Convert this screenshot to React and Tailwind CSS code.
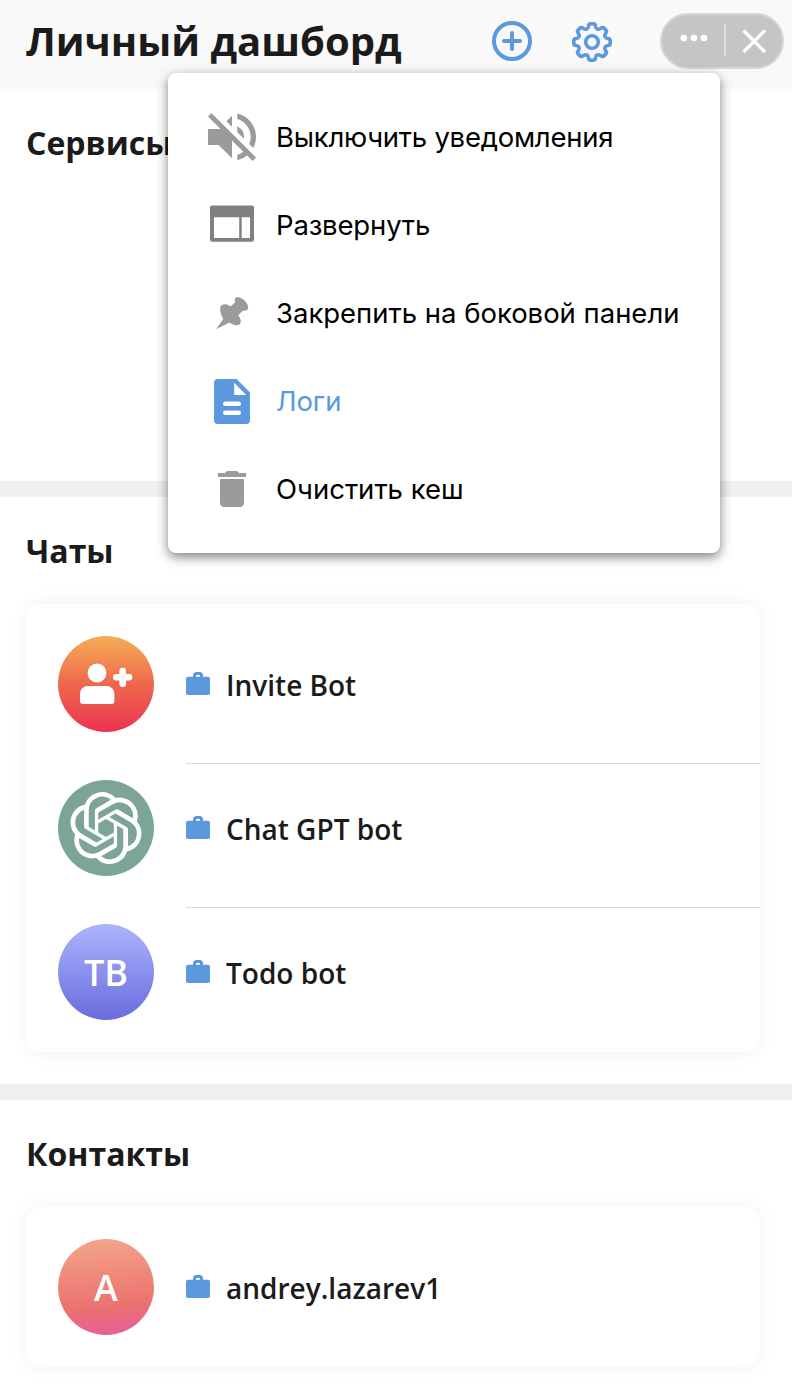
import React from 'react';
import { MdVolumeOff, MdDelete } from 'react-icons/md';
import { SiOpenai } from 'react-icons/si';

const TOOTH_ANGLES = [0, 45, 90, 135, 180, 225, 270, 315];

function rotate(x, y, deg) {
  const a = (deg * Math.PI) / 180;
  return `${(20 + x * Math.cos(a) - y * Math.sin(a)).toFixed(2)} ${(20 + x * Math.sin(a) + y * Math.cos(a)).toFixed(2)}`;
}

const gearPath =
  TOOTH_ANGLES.map((deg, i) => {
    const p = (x, y) => rotate(x, y, deg);
    const next = (x, y) => rotate(x, y, deg + 45);
    return `${i === 0 ? 'M' : 'L'}${p(-3.5, -15.8)} Q${p(-3.3, -18.2)} ${p(-1.4, -18.2)} L${p(1.4, -18.2)} Q${p(3.3, -18.2)} ${p(3.5, -15.8)} C${p(3.9, -12.8)} ${next(-3.9, -12.8)} ${next(-3.5, -15.8)}`;
  }).join(' ') + 'Z';

function PlusCircleIcon() {
  return (
    <svg className="size-10" viewBox="0 0 40 40" fill="none" stroke="currentColor" strokeWidth="4" strokeLinecap="round">
      <circle cx="20" cy="20" r="18" />
      <path d="M12 20h16M20 12v16" />
    </svg>
  );
}

function GearIcon() {
  return (
    <svg className="size-10" viewBox="0 0 40 40" fill="none" stroke="currentColor" strokeWidth="3.6" strokeLinejoin="round">
      <path d={gearPath} />
      <circle cx="20" cy="20" r="6.3" />
    </svg>
  );
}

function WindowIcon() {
  return (
    <svg className="mb-[3px] h-[37px] w-11" viewBox="0 0 44 37">
      <rect y="0.500" width="44" height="36.200" rx="2" fill="#808080" />
      <path fill="#fff" d="M4 12.300h25.200v20.700H4zM31.700 12.300H40v20.700h-8.300z" />
    </svg>
  );
}

function PinIcon() {
  return (
    <svg className="h-[34px] w-[34px] text-[#9b9b9b]" viewBox="0 0 34 34" fill="currentColor">
      <path d="M1.200 33.300L8.300 22.700C6 19.500 5 16 5.200 12.500C5.300 9.800 7 8.300 10 8.300C12.500 8.500 14 9.600 15.500 10.500L20.300 6.200C19 3.500 20 1.200 22.800 1.200C27.500 1.500 33.200 6.500 33.200 11.800C33 14.300 30.500 15.200 28 14.500L23.200 19.200C25.200 21.500 26 24 25.700 26.300C25.300 28.800 23 29.700 20.500 29.200C18 28.700 16 27.700 14.300 26.500Z" />
    </svg>
  );
}

function LogIcon() {
  return (
    <svg className="h-[45px] w-9" viewBox="0 0 36 45">
      <path fill="currentColor" d="M4 0h18.500L36 13.500V41a4 4 0 0 1-4 4H4a4 4 0 0 1-4-4V4a4 4 0 0 1 4-4z" />
      <path fill="#fff" d="M20.200 3.700v12.200h12z" />
      <rect x="9" y="22.500" width="18" height="4.400" rx="2.200" fill="#fff" />
      <rect x="9" y="31.500" width="18" height="4.400" rx="2.200" fill="#fff" />
    </svg>
  );
}

function BriefcaseIcon() {
  return (
    <svg className="size-6 shrink-0 text-[#5b98de]" viewBox="0 0 24 24">
      <rect y="4.700" width="24" height="18.300" rx="2" fill="currentColor" />
      <path d="M8.500 6V3.500a2 2 0 0 1 2-2h3a2 2 0 0 1 2 2V6" fill="none" stroke="currentColor" strokeWidth="3" />
    </svg>
  );
}

function InviteIcon() {
  return (
    <svg className="size-24" viewBox="0 0 96 96" fill="#fff">
      <circle cx="39" cy="37" r="9.400" />
      <path d="M30 50h18.400a8 8 0 0 1 8 8v7a3 3 0 0 1-3 3H25a3 3 0 0 1-3-3v-7a8 8 0 0 1 8-8z" />
      <path d="M58.300 41.300H71M64.700 35v12.700" stroke="#fff" strokeWidth="6.600" strokeLinecap="round" />
    </svg>
  );
}

const menuItems = [
  { label: 'Выключить уведомления', tracking: 'tracking-[-0.25px]', icon: <MdVolumeOff className="size-16 shrink-0 text-[#9b9b9b]" /> },
  { label: 'Развернуть', tracking: 'tracking-[-0.16px]', icon: <WindowIcon /> },
  { label: 'Закрепить на боковой панели', tracking: 'tracking-[-0.02px]', icon: <PinIcon /> },
  { label: 'Логи', tracking: 'tracking-[-0.1px]', icon: <LogIcon />, active: true },
  { label: 'Очистить кеш', tracking: 'tracking-normal', icon: <MdDelete className="size-12 text-[#9b9b9b]" /> },
];

const chats = [
  { name: 'Invite Bot', avatar: <InviteIcon />, bg: 'bg-linear-to-b from-[#f4ae56] via-[#ee674d] to-[#eb2f50]' },
  { name: 'Chat GPT bot', avatar: <SiOpenai className="size-[72px] text-white" />, bg: 'bg-[#7ca598]' },
  { name: 'Todo bot', avatar: 'TB', bg: 'bg-linear-to-b from-[#acb5fb] to-[#6a6bdd] pt-0.5' },
];

const contacts = [
  { name: 'andrey.lazarev1', avatar: 'A', bg: 'bg-[linear-gradient(175deg,#f3a488_4%,#eb716f_70%,#e55da0_100%)] pt-0.5' },
];

function Card({ items }) {
  return (
    <ul className="mx-[26px] mr-8 rounded-2xl bg-white pt-4 shadow-[0_0_20px_rgba(0,0,0,0.06)]">
      {items.map((item, i) => (
        <li key={item.name} className="flex h-36 pl-8">
          <div className={`mt-4 flex size-24 shrink-0 items-center justify-center rounded-full text-[36px] font-semibold text-white ${item.bg}`}>
            {item.avatar}
          </div>
          <div className={`ml-8 flex flex-1 items-center gap-4 border-b pt-4 pb-[31px] ${i < items.length - 1 ? 'border-[#d8d8d8]' : 'border-transparent'}`}>
            <BriefcaseIcon />
            <span className="pt-px text-[28px] leading-10 font-semibold">{item.name}</span>
          </div>
        </li>
      ))}
    </ul>
  );
}

function Section({ title, children, className }) {
  return (
    <section className={className}>
      <h2 className="px-[26px] pt-8 text-[32px] leading-[44px] font-bold">{title}</h2>
      {children}
    </section>
  );
}

function ContextMenu() {
  return (
    <div className="absolute top-[73px] left-[168px] h-[480px] w-[552px] rounded-lg bg-white py-5 shadow-[0_4px_12px_rgba(0,0,0,0.5)]">
      {menuItems.map((item) => (
        <div key={item.label} className={`flex h-[88px] items-center pl-8 ${item.active ? 'text-[#5b98de]' : 'text-black'}`}>
          <div className="flex w-16 shrink-0 items-center justify-center">{item.icon}</div>
          <span className={`ml-3 pt-px font-['Inter',sans-serif] text-[27.5px] whitespace-nowrap ${item.tracking}`}>{item.label}</span>
        </div>
      ))}
    </div>
  );
}

export default function App() {
  return (
    <div className="relative h-[1398px] w-[792px] overflow-hidden bg-white font-['Open_Sans',sans-serif] text-[#1b1b1b]">
      <header className="flex h-[89px] items-start bg-[#f9f9f9] pr-2 pl-[26px]">
        <h1 className="mt-[14px] flex-1 text-[40px] leading-[54px] font-bold whitespace-nowrap">Личный дашборд</h1>
        <div className="mt-[21px] flex gap-10 text-[#5b98de]">
          <PlusCircleIcon />
          <div className="pt-px"><GearIcon /></div>
        </div>
        <div className="mt-[13px] ml-12 flex h-14 w-[124px] rounded-full border-2 border-[#d6d6d6] bg-[#c5c5c5]">
          <svg className="h-[52px] w-[120px]" viewBox="0 0 120 52" fill="#fff">
            <circle cx="21.800" cy="23" r="3.300" />
            <circle cx="32" cy="23" r="3.300" />
            <circle cx="42" cy="23" r="3.300" />
            <rect x="62" y="9" width="2" height="32" fill="#dcdcdc" />
            <path d="M81.500 15.500l21.500 21.500M103 15.500l-21.500 21.500" stroke="#fff" strokeWidth="3.200" />
          </svg>
        </div>
      </header>
      <main>
        <Section title="Сервисы" className="h-[392px]" />
        <div className="h-4 bg-[#f0f0f0]" />
        <Section title="Чаты" className="h-[587px]">
          <div className="pt-[31px]"><Card items={chats} /></div>
        </Section>
        <div className="h-4 bg-[#f0f0f0]" />
        <Section title="Контакты">
          <div className="pt-[31px]"><Card items={contacts} /></div>
        </Section>
      </main>
      <ContextMenu />
    </div>
  );
}
